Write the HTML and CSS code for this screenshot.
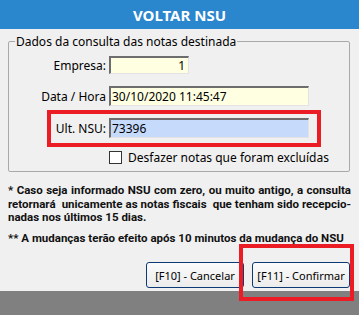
FILE: index.html
```html
<!DOCTYPE html>
<html lang="pt-BR">
<head>
    <meta charset="UTF-8">
    <title>Voltar NSU</title>
    <link rel="stylesheet" href="styles.css">
</head>
<body>

    <div class="dialog">
        <!-- Title bar -->
        <div class="titlebar">VOLTAR NSU</div>

        <fieldset class="group">
            <legend>Dados da consulta das notas destinada</legend>

            <div class="row row-empresa">
                <label>Empresa:</label>
                <input class="field field-short" type="text" value="1">
            </div>

            <div class="row row-data">
                <label>Data / Hora</label>
                <input class="field" type="text" value="30/10/2020 11:45:47">
            </div>

            <div class="row row-nsu marked">
                <label>Ult. NSU:</label>
                <input class="field field-blue" type="text" value="73396">
            </div>

            <div class="check-row">
                <span class="checkbox"></span>
                <span>Desfazer notas que foram excluídas</span>
            </div>
        </fieldset>

        <div class="notes">
            <p>
                <span class="line">* Caso seja informado NSU com zero, ou muito antigo, a consulta</span>
                <span class="line">retornará&nbsp; unicamente as notas fiscais&nbsp; que tenham sido recepcio-</span>
                nadas nos últimos 15 dias.
            </p>
            <p>** A mudanças terão efeito após 10 minutos da mudança do NSU</p>
        </div>

        <div class="buttons">
            <button class="btn">[F10] - Cancelar</button>
            <span class="marked marked-btn">
                <button class="btn">[F11] - Confirmar</button>
            </span>
        </div>
    </div>

</body>
</html>
```

FILE: styles.css
```css
* {
    margin: 0;
    padding: 0;
    box-sizing: border-box;
}

body {
    width: 359px;
    height: 315px;
    background: #808080;
    font-family: 'Noto Sans', 'Open Sans', sans-serif;
    font-size: 12px;
    color: #000;
    overflow: hidden;
}

.dialog {
    height: 291px;
    background: #f0f0f0;
}

/* Title bar */
.titlebar {
    height: 29px;
    background: #2a86cd;
    color: #fff;
    font-weight: 700;
    font-size: 15px;
    display: flex;
    align-items: center;
    justify-content: center;
    padding-top: 1px;
}

/* Group box */
.group {
    margin: 5px 9px 0 8px;
    border: 1px solid #a9a9a9;
    border-radius: 2px;
    height: 138px;
    padding: 0;
}

.group legend {
    margin-left: 6px;
    padding: 0 1px;
    line-height: 15px;
}

.row {
    display: flex;
    align-items: center;
    position: relative;
}

.row label {
    width: 97px;
    text-align: right;
    margin-right: 3px;
}

.row-empresa {
    margin-top: 7px;
}

.row-data {
    margin-top: 12px;
}

.row-nsu {
    margin-top: 12px;
}

.field {
    width: 200px;
    height: 20px;
    font-family: inherit;
    font-size: 12px;
    color: #000;
    background: #ffffe1;
    border: 1px solid #e3e3e3;
    border-top: 2px solid #6d6d6d;
    border-left: 2px solid #6d6d6d;
    padding: 0 3px 1px 1px;
    outline: none;
}

.field-short {
    width: 80px;
    height: 18px;
    text-align: right;
}

.field-blue {
    background: #c6dafc;
}

/* Red annotation frames */
.marked::before {
    content: '';
    position: absolute;
    border: 4px solid #ec1c24;
    pointer-events: none;
}

.row-nsu::before {
    left: 38px;
    right: 28px;
    top: -8px;
    bottom: -9px;
}

.check-row {
    display: flex;
    align-items: center;
    margin-top: 11px;
    padding-left: 100px;
    gap: 6px;
}

.checkbox {
    width: 13px;
    height: 13px;
    background: #fff;
    border: 1px solid #333;
}

/* Notes */
.notes {
    padding: 12px 8px 0 8px;
    font-family: Roboto, 'Noto Sans', sans-serif;
    font-size: 11.5px;
    font-weight: 700;
    line-height: 13.5px;
    color: #111;
}

.notes p {
    margin-bottom: 7px;
    white-space: nowrap;
}

.notes .line {
    display: block;
    text-align: justify;
    text-align-last: justify;
    white-space: normal;
}

/* Buttons */
.buttons {
    display: flex;
    justify-content: flex-end;
    gap: 8px;
    padding: 10px 9px 0 0;
}

.btn {
    width: 98px;
    height: 26px;
    font-family: inherit;
    font-size: 11px;
    color: #000;
    background: linear-gradient(#fbfbfb, #ececec);
    border: 1px solid #0b3a74;
    border-radius: 3px;
}

.marked-btn {
    position: relative;
    display: flex;
}

.marked-btn::before {
    left: -13px;
    right: -4px;
    top: -18px;
    bottom: -13px;
}
```
